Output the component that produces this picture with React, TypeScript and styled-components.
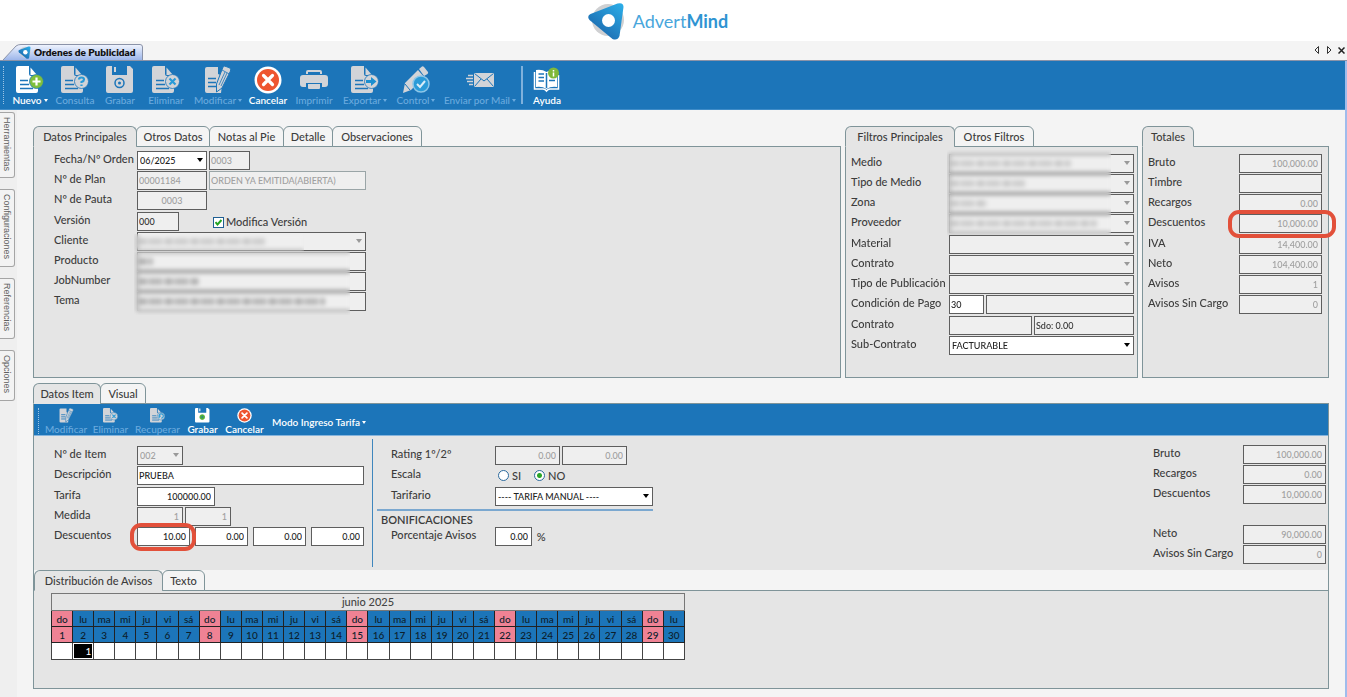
import React, { useId, useState } from "react";
import styled, { createGlobalStyle, css } from "styled-components";

const font = `"Lato", "Open Sans", sans-serif`;
const c = {
  blue: "#1c75b9",
  page: "#f4f4f4",
  panel: "#e5e5e5",
  line: "#7f9499",
  ink: "#3c3c3c",
  field: "#efefef",
  muted: "#a0a0a0",
};

const GlobalStyle = createGlobalStyle`
  *, *::before, *::after { box-sizing: border-box; }
  body { margin: 0; background: ${c.page}; color: ${c.ink}; font: 500 11px/14px ${font}; }
  button, input, select { font-family: inherit; margin: 0; }
`;

const Page = styled.div`
  min-height: 100vh;
  display: flex;
  flex-direction: column;
`;

const Brand = styled.header`
  height: 41px;
  background: #fff;
  display: flex;
  align-items: center;
  justify-content: center;
  gap: 8px;
  padding-right: 32px;
`;

const BrandName = styled.span`
  font: 400 18px/20px ${font};
  color: #48a6dc;
  b { font-weight: 700; color: #2f94d2; }
`;

const WindowTabs = styled.div`
  height: 20px;
  display: flex;
  justify-content: space-between;
  align-items: flex-end;
  padding: 0 1px 0 3px;
  border-bottom: 1px solid #8b93a8;
`;

const WindowTab = styled.button`
  position: relative;
  height: 16px;
  width: 140px;
  padding: 0 0 0 15px;
  border: 0;
  background: none;
  display: flex;
  align-items: center;
  gap: 3px;
  white-space: nowrap;
  font-size: 10px;
  line-height: 14px;
  font-weight: 800;
  color: #111;
`;

const TabShape = styled.svg`
  position: absolute;
  inset: 0;
  width: 140px;
  height: 16px;
`;

const Above = styled.span`
  position: relative;
  display: flex;
`;

const WindowControls = styled.div`
  display: flex;
  align-items: center;
  height: 20px;
  gap: 2px;
  button { border: 0; padding: 0; background: none; width: 10px; height: 10px; display: flex; align-items: center; justify-content: center; }
`;

const Frame = styled.div`
  flex: 1;
  display: flex;
  flex-direction: column;
  border-right: 2px solid #9fbcec;
`;

const ToolBar = styled.div<{ $compact?: boolean }>`
  display: flex;
  align-items: stretch;
  background: ${c.blue};
  height: ${(p) => (p.$compact ? 32 : 49)}px;
  padding: ${(p) => (p.$compact ? "4px 0 0 4px" : "5px 0 0 3px")};
  border-bottom: 1px solid ${(p) => (p.$compact ? "#86b4dc" : "#3f8cc8")};
`;

const Grip = styled.span<{ $compact?: boolean }>`
  width: ${(p) => (p.$compact ? 6 : 5)}px;
  height: ${(p) => (p.$compact ? 26 : 38)}px;
  border-left: 1px dotted #9cc3e4;
`;

const ToolButton = styled.button<{ $w: number }>`
  width: ${(p) => p.$w}px;
  padding: 0;
  border: 0;
  background: none;
  display: flex;
  flex-direction: column;
  align-items: center;
  color: #fff;
  font-size: 10px;
  line-height: 12px;
  font-weight: 600;
  white-space: nowrap;
  svg { flex: none; }
  &:disabled { color: #6aaade; font-weight: 500; }
`;

const Caption = styled.span`
  display: flex;
  align-items: center;
  gap: 2px;
`;

const Caret = styled.span`
  border: 2px solid transparent;
  border-top: 3px solid currentColor;
  border-bottom: 0;
`;

const MenuButton = styled.button`
  margin: 0 0 0 6px;
  padding: 0;
  height: 28px;
  border: 0;
  background: none;
  color: #fff;
  font-size: 10px;
  line-height: 12px;
  font-weight: 600;
`;

const ToolDivider = styled.span`
  width: 2px;
  height: 38px;
  margin: 0 1px;
  background: #7fb1dc;
`;

const Body = styled.div`
  flex: 1;
  display: flex;
`;

const Rail = styled.nav`
  width: 17px;
  background: #efefef;
  padding-top: 2px;
  display: flex;
  flex-direction: column;
  gap: 11px;
`;

const RailTab = styled.button<{ $h: number }>`
  width: 15px;
  height: ${(p) => p.$h}px;
  padding: 0 0 2px;
  border: 1px solid #a5a5a5;
  border-left: 0;
  border-radius: 0 3px 3px 0;
  background: #f3f3f3;
  color: #606060;
  font: 9px/12px "Liberation Sans", sans-serif;
  writing-mode: vertical-rl;
  display: flex;
  align-items: center;
  justify-content: center;
`;

const Content = styled.main`
  flex: 1;
  min-width: 0;
  padding: 16px 16px 8px;
  display: flex;
  flex-direction: column;
  gap: 5px;
`;

const TopPanels = styled.div`
  display: grid;
  grid-template-columns: 1fr 293px 187px;
  gap: 4px;
`;

const Section = styled.section`
  display: flex;
  flex-direction: column;
`;

const Tabs = styled.div`
  display: flex;
  height: 20px;
`;

const Tab = styled.button<{ $w: number; $on?: boolean }>`
  position: relative;
  width: ${(p) => p.$w}px;
  height: 21px;
  margin-right: -1px;
  padding: 0;
  border: 1px solid ${c.line};
  border-bottom-color: ${(p) => (p.$on ? c.panel : c.line)};
  border-radius: 6px 6px 0 0;
  background: ${(p) => (p.$on ? c.panel : c.page)};
  color: ${c.ink};
  font-size: 11px;
  line-height: 14px;
  font-weight: 500;
  white-space: nowrap;
`;

const Panel = styled.div<{ $pad?: string; $h?: number }>`
  flex: 1;
  min-height: ${(p) => p.$h ?? 0}px;
  padding: ${(p) => p.$pad ?? "0"};
  border: 1px solid ${c.line};
  background: ${c.panel};
`;

const Group = styled.div`
  position: relative;
  display: flex;
  flex-direction: column;
  gap: 1px;
  & + & { margin-top: 2px; }
`;

const Row = styled.div<{ $label: number; $pad?: number }>`
  display: grid;
  grid-template-columns: ${(p) => p.$label}px auto;
  justify-content: start;
  align-items: center;
  height: 19px;
  padding-left: ${(p) => p.$pad ?? 0}px;
  white-space: nowrap;
  font-size: 11px;
  & > label, & > span { line-height: 14px; padding-bottom: 3px; }
`;

const Fields = styled.div<{ $gap?: number }>`
  display: flex;
  align-items: center;
  gap: ${(p) => p.$gap ?? 2}px;
`;

const fieldBox = css`
  height: 19px;
  border: 1px solid #5e5e5e;
  border-radius: 0;
  background: #fff;
  color: #222;
  font-size: 9px;
  font-weight: 500;
  line-height: 14px;
  &:disabled, &:read-only:not(select) { background: ${c.field}; color: ${c.muted}; opacity: 1; }
`;

const TextField = styled.input<{ $w: number; $align?: string; $dark?: boolean; $soft?: boolean }>`
  ${fieldBox}
  width: ${(p) => p.$w}px;
  padding: 0 ${(p) => (p.$align === "right" ? 3 : 1)}px;
  text-align: ${(p) => p.$align ?? "left"};
  ${(p) => p.$dark && "&&:read-only { color: #333; }"}
  ${(p) => p.$soft && "&& { border-color: #9aa5a7; color: #7f8a8c; }"}
`;

const SelectWrap = styled.span<{ $w: number; $off?: boolean }>`
  position: relative;
  width: ${(p) => p.$w}px;
  height: 19px;
  display: block;
  &::after {
    content: "";
    position: absolute;
    right: 4px;
    top: 7px;
    border: 3px solid transparent;
    border-top: 4px solid ${(p) => (p.$off ? "#999" : "#000")};
    border-bottom: 0;
    pointer-events: none;
  }
`;

const SelectBox = styled.select`
  ${fieldBox}
  appearance: none;
  width: 100%;
  padding: 0 12px 0 2px;
`;

const Frost = styled.span<{ $w: number; $top: number; $bottom: number; $left: number }>`
  position: absolute;
  left: ${(p) => p.$left}px;
  top: ${(p) => p.$top}px;
  bottom: ${(p) => p.$bottom}px;
  width: ${(p) => p.$w}px;
  backdrop-filter: blur(2px);
`;

const Smudge = styled.span<{ $w: number; $strong?: boolean }>`
  position: absolute;
  left: 2px;
  top: 6px;
  width: ${(p) => p.$w}px;
  height: 7px;
  opacity: ${(p) => (p.$strong ? 1 : 0.6)};
  background: repeating-linear-gradient(90deg, #b2b2b2 0 7px, #cfcfcf 7px 10px, #bababa 10px 23px, #dadada 23px 26px);
`;

const Holder = styled.span`
  position: relative;
  display: block;
  height: 19px;
`;

const Marker = styled.span<{ $l: number; $r: number }>`
  position: absolute;
  z-index: 2;
  left: -${(p) => p.$l}px;
  right: -${(p) => p.$r}px;
  top: -4px;
  bottom: -5px;
  border: 4px solid #e2503a;
  border-radius: 11px;
  pointer-events: none;
`;

const CheckLabel = styled.label`
  display: flex;
  align-items: center;
  gap: 2px;
  margin-left: 32px;
  padding-top: 1px;
  position: relative;
  svg { position: absolute; left: 2px; top: 5px; pointer-events: none; }
`;

const CheckBox = styled.input`
  appearance: none;
  width: 11px;
  height: 11px;
  border: 1px solid #1f5f93;
  background: #fff;
`;

const RadioLabel = styled.label`
  display: flex;
  align-items: center;
  gap: 3px;
`;

const Radio = styled.input`
  appearance: none;
  width: 11px;
  height: 11px;
  border: 1px solid #2c6a9d;
  border-radius: 50%;
  background: #fff;
  &:checked { background: radial-gradient(circle, #2aa52a 0 2px, #fff 3px); }
`;

const ItemArea = styled.div`
  display: flex;
  height: 134px;
  padding: 3px 2px 3px 0;
`;

const ItemLeft = styled.div`
  width: 339px;
  padding: 7px 0 0 20px;
  border-right: 1px solid #3f86bd;
`;

const ItemMiddle = styled.div`
  width: 280px;
  padding: 7px 0 0 4px;
`;

const ItemTotals = styled.div`
  margin-left: auto;
  padding-top: 6px;
`;

const TotalsGap = styled.div`
  height: 21px;
`;

const Rule = styled.hr`
  height: 2px;
  margin: 3px 0 1px;
  border: 0;
  background: #7ba8d0;
`;

const SubTitle = styled.h3`
  margin: 0;
  padding-left: 4px;
  font-size: 11px;
  line-height: 15px;
  font-weight: 600;
`;

const Strip = styled.div`
  background: ${c.page};
`;

const CalendarPanel = styled.div`
  min-height: 98px;
  padding: 2px 0 0 17px;
  border-top: 1px solid ${c.line};
`;

const Calendar = styled.table`
  width: 634px;
  table-layout: fixed;
  border-collapse: collapse;
  background: #fff;
  text-align: center;
  font-size: 10px;
  line-height: 12px;
  color: #0c1e2c;
  th, td { padding: 0; height: 16px; border: 1px solid #222; font-weight: 500; }
  thead tr:first-child th { background: ${c.panel}; color: #444; height: 17px; border-color: #777; font-size: 11px; }
  td { height: 17px; border-color: #444; }
`;

const DayCell = styled.th<{ $sunday: boolean }>`
  background: ${(p) => (p.$sunday ? "#ef8294" : c.blue)};
`;

const ValueCell = styled.td<{ $on: boolean }>`
  ${(p) => p.$on && "background: #000; color: #fff; text-align: right; box-shadow: inset 0 0 0 1px #fff;"}
  && { padding-right: 2px; }
`;

/* ---------- drawings ---------- */

const OFF = "#d2d4d8";

function Logo({ size }: { size: number }) {
  const id = useId();
  return (
    <svg width={size} height={size} viewBox="0 0 37 38" aria-hidden="true">
      <defs>
        <linearGradient id={id} x1="1" y1="0" x2="0.2" y2="1">
          <stop offset="0" stopColor="#2cb0ea" />
          <stop offset="1" stopColor="#1b62a8" />
        </linearGradient>
      </defs>
      <circle cx="20.500" cy="18" r="16" fill="#cfd0d2" />
      <path d="M3 12 L30 1.500 Q36 0 36 5 L32 34 Q30 39 25 37 L2 18 Q-1 14 3 12Z" fill={`url(#${id})`} />
      <circle cx="21" cy="18.500" r="6.500" fill="#fff" />
    </svg>
  );
}

function Doc({ color, children, size = 28 }: { color: string; children?: React.ReactNode; size?: number }) {
  return (
    <svg width={size} height={size} viewBox="0 0 28 28" aria-hidden="true">
      <path d="M2 0H13V8Q13 10 15 10H22V25Q22 27 20 27H2Q0 27 0 25V2Q0 0 2 0Z" fill={color} />
      <path d="M14.500 1.500L21 9H14.500Z" fill={color} />
      <path d="M4 14.500H12M4 18.500H13M4 22.500H17" stroke={c.blue} strokeWidth="1.500" />
      {children}
    </svg>
  );
}

const Badge = ({ fill, mark, markColor }: { fill: string; mark: string; markColor: string }) => (
  <>
    <circle cx="20.500" cy="15.500" r="7" fill={fill} stroke={c.blue} strokeWidth="0.800" />
    <path d={mark} stroke={markColor} strokeWidth="2.200" fill="none" />
  </>
);

const NewIcon = () => <Doc color="#fff"><Badge fill="#7fbf3c" mark="M20.500 11.500V19.500M16.500 15.500H24.500" markColor="#fff" /></Doc>;
const QueryIcon = () => (
  <Doc color={OFF}><Badge fill={OFF} mark="M18 13.500Q18 11.500 20.500 11.500T23 13.500Q23 15 20.500 16V17M20.500 18.500V20" markColor="#2a9bd8" /></Doc>
);
const DeleteIcon = ({ size }: { size?: number }) => (
  <Doc color={OFF} size={size}><Badge fill={OFF} mark="M17.500 12.500L23.500 18.500M23.500 12.500L17.500 18.500" markColor="#2a9bd8" /></Doc>
);
const RecoverIcon = ({ size }: { size?: number }) => (
  <Doc color={OFF} size={size}><Badge fill={OFF} mark="M17 16A4 4 0 1 1 21 19M17 19V15H20" markColor="#2a9bd8" /></Doc>
);
const ExportIcon = () => (
  <Doc color={OFF}>
    <circle cx="20.500" cy="15.500" r="7" fill={OFF} stroke={c.blue} strokeWidth="0.800" />
    <path d="M15 14H20V11L25.500 15.500L20 20V17H15Z" fill="#1b8fd0" />
  </Doc>
);

function SaveIcon({ color, dot, size = 28 }: { color: string; dot: string; size?: number }) {
  return (
    <svg width={size} height={size} viewBox="0 0 28 28" aria-hidden="true">
      <path d="M2 0H6V9H21V0H24L27 3V25Q27 27 25 27H2Q0 27 0 25V2Q0 0 2 0Z" fill={color} />
      <path d="M8 1H10V6H8Z" fill={color} />
      <circle cx="13.500" cy="17" r="4.500" fill={dot === c.blue ? "none" : dot} stroke={dot} strokeWidth="1.500" />
      <circle cx="13.500" cy="17" r="1.500" fill={c.blue} />
    </svg>
  );
}

function EditIcon({ size = 28 }: { size?: number }) {
  return (
    <svg width={size} height={size} viewBox="0 0 28 28" aria-hidden="true">
      <path d="M3 1H14V8L19 10L17 27H3Q1 27 1 25V3Q1 1 3 1Z" fill={OFF} />
      <path d="M4 12.500H12M4 16.500H12M4 20.500H12" stroke={c.blue} strokeWidth="1.500" />
      <path d="M19 1Q20 -0.500 22 0.500L26 2Q27 3 26.500 5L18 22L12.500 26L12.500 18Z" fill={OFF} stroke={c.blue} />
      <path d="M18 4L25.500 8M21 6L15 19M23 7L17 20" stroke={c.blue} strokeWidth="0.800" />
    </svg>
  );
}

function CancelIcon({ size = 28 }: { size?: number }) {
  return (
    <svg width={size} height={size} viewBox="0 0 28 28" aria-hidden="true">
      <circle cx="14" cy="14" r="13.500" fill="#fff" />
      <circle cx="14" cy="14" r="11" fill="#ee5530" />
      <path d="M9.500 9.500L18.500 18.500M18.500 9.500L9.500 18.500" stroke="#fff" strokeWidth="3.200" strokeLinecap="round" />
    </svg>
  );
}

const PrintIcon = () => (
  <svg width="28" height="28" viewBox="0 0 28 28" aria-hidden="true">
    <path d="M6 8V6Q6 4 8 4H20Q22 4 22 6V8H20V6H8V8Z" fill={OFF} />
    <path d="M3 9H25Q28 9 28 12V18Q28 21 25 21H22V17H6V21H3Q0 21 0 18V12Q0 9 3 9Z" fill={OFF} />
    <path d="M8 18H20V22Q20 23 19 23H9Q8 23 8 22Z" fill={OFF} />
  </svg>
);

const ControlIcon = () => (
  <svg width="28" height="28" viewBox="0 0 28 28" aria-hidden="true">
    <path d="M17 3L20 0.500Q21 0 22 1L26 6Q26.500 7 25.500 8L22 10Z" fill={OFF} />
    <path d="M16 4L22 11L9 24L1 27L3 17Z" fill={OFF} />
    <path d="M3 18L8 24" stroke={c.blue} />
    <circle cx="19" cy="18" r="8" fill="#2a9bd8" stroke="#8cc6e8" strokeWidth="1.500" />
    <path d="M15 18L18 21L23 15" stroke="#d8edf8" strokeWidth="2" fill="none" />
  </svg>
);

const MailIcon = () => (
  <svg width="28" height="28" viewBox="0 0 28 28" aria-hidden="true">
    <path d="M8 7H28V21H8Z" fill={OFF} />
    <path d="M8.500 7.500L18 15L27.500 7.500M8.500 20.500L15 13M27.500 20.500L21 13" stroke={c.blue} fill="none" />
    <path d="M2 9.500H7M0 12.500H7M1 15.500H7M3 18.500H7" stroke={OFF} strokeWidth="1.500" />
  </svg>
);

const HelpIcon = () => (
  <svg width="28" height="28" viewBox="0 0 28 28" aria-hidden="true">
    <path d="M3 4Q9 3 13.500 6Q18 3 24 4V21Q18 20 13.500 23Q9 20 3 21Z" fill="#fff" />
    <path d="M1.500 6V23H10Q12 23 13.500 25Q15 23 17 23H25.500V9" stroke="#fff" strokeWidth="1.500" fill="none" />
    <path d="M13.500 7V22M5.500 8H11M5.500 11.500H11M5.500 15H11M16 14.500H22" stroke={c.blue} strokeWidth="1.500" />
    <circle cx="20.500" cy="7" r="5.500" fill="#7fb83a" />
    <path d="M20.500 4V5.500M20.500 6.500V10.500" stroke="#fff" strokeWidth="1.500" />
  </svg>
);

/* ---------- form parts ---------- */

function Labeled({ text, label, pad, children }: { text: string; label: number; pad?: number; children: (id: string) => React.ReactNode }) {
  const id = useId();
  return (
    <Row $label={label} $pad={pad}>
      <label htmlFor={id}>{text}</label>
      <Fields>{children(id)}</Fields>
    </Row>
  );
}

function Dropdown({ id, w, value = "", off, smudge }: { id: string; w: number; value?: string; off?: boolean; smudge?: number }) {
  return (
    <SelectWrap $w={w} $off={off}>
      <SelectBox id={id} disabled={off} defaultValue={value}>
        <option>{value}</option>
      </SelectBox>
      {smudge ? <Smudge $w={smudge} /> : null}
    </SelectWrap>
  );
}

function Tool({ w, icon, text, off, menu }: { w: number; icon: React.ReactNode; text: string; off?: boolean; menu?: boolean }) {
  return (
    <ToolButton $w={w} disabled={off}>
      {icon}
      <Caption>{text}{menu && <Caret />}</Caption>
    </ToolButton>
  );
}

function TabBar({ items }: { items: [string, number][] }) {
  const [on, setOn] = useState(0);
  return (
    <Tabs role="tablist">
      {items.map(([text, w], i) => (
        <Tab key={text} role="tab" aria-selected={i === on} $w={w} $on={i === on} onClick={() => setOn(i)}>{text}</Tab>
      ))}
    </Tabs>
  );
}

const totals: [string, string][][] = [
  [["Bruto", "100,000.00"], ["Timbre", ""], ["Recargos", "0.00"], ["Descuentos", "10,000.00"]],
  [["IVA", "14,400.00"], ["Neto", "104,400.00"], ["Avisos", "1"], ["Avisos Sin Cargo", "0"]],
];

const itemTotals: [string, string][][] = [
  [["Bruto", "100,000.00"], ["Recargos", "0.00"], ["Descuentos", "10,000.00"]],
  [["Neto", "90,000.00"], ["Avisos Sin Cargo", "0"]],
];

const weekdays = ["do", "lu", "ma", "mi", "ju", "vi", "sá"];
const days = Array.from({ length: 30 }, (_, i) => i);

export default function App() {
  return (
    <Page>
      <GlobalStyle />
      <Brand>
        <Logo size={38} />
        <BrandName>Advert<b>Mind</b></BrandName>
      </Brand>
      <WindowTabs>
        <WindowTab>
          <TabShape viewBox="0 0 140 16" aria-hidden="true">
            <defs>
              <linearGradient id="tabFill" x1="0" y1="0" x2="0" y2="1">
                <stop offset="0" stopColor="#f1f5fe" />
                <stop offset="1" stopColor="#9db6ea" />
              </linearGradient>
            </defs>
            <path d="M0 16L13 2Q15 .5 18 .5H137Q139.500 .5 139.500 3V16" fill="url(#tabFill)" stroke="#8b93a8" />
          </TabShape>
          <Above><Logo size={13} /></Above>
          <Above>Ordenes de Publicidad</Above>
        </WindowTab>
        <WindowControls>
          <button aria-label="Anterior"><svg width="6" height="8" viewBox="0 0 6 8"><path d="M4.500 .5V7.500L1 4Z" fill="none" stroke="#333" /></svg></button>
          <button aria-label="Siguiente"><svg width="6" height="8" viewBox="0 0 6 8"><path d="M1.500 .5V7.500L5 4Z" fill="none" stroke="#333" /></svg></button>
          <button aria-label="Cerrar"><svg width="7" height="7" viewBox="0 0 7 7"><path d="M.5 .5L6.500 6.500M6.500 .5L.5 6.500" stroke="#222" strokeWidth="1.500" /></svg></button>
        </WindowControls>
      </WindowTabs>
      <Frame>
        <ToolBar>
          <Grip />
          <Tool w={44} icon={<NewIcon />} text="Nuevo" menu />
          <Tool w={46} icon={<QueryIcon />} text="Consulta" off />
          <Tool w={44} icon={<SaveIcon color={OFF} dot={c.blue} />} text="Grabar" off />
          <Tool w={48} icon={<DeleteIcon />} text="Eliminar" off />
          <Tool w={56} icon={<EditIcon />} text="Modificar" off menu />
          <Tool w={44} icon={<CancelIcon />} text="Cancelar" />
          <Tool w={48} icon={<PrintIcon />} text="Imprimir" off />
          <Tool w={54} icon={<ExportIcon />} text="Exportar" off menu />
          <Tool w={48} icon={<ControlIcon />} text="Control" off menu />
          <Tool w={80} icon={<MailIcon />} text="Enviar por Mail" off menu />
          <ToolDivider />
          <Tool w={46} icon={<HelpIcon />} text="Ayuda" />
        </ToolBar>
        <Body>
          <Rail>
            <RailTab $h={66}>Herramientas</RailTab>
            <RailTab $h={78}>Configuraciones</RailTab>
            <RailTab $h={61}>Referencias</RailTab>
            <RailTab $h={51}>Opciones</RailTab>
          </Rail>
          <Content>
            <TopPanels>
              <Section>
                <TabBar items={[["Datos Principales", 104], ["Otros Datos", 74], ["Notas al Pie", 75], ["Detalle", 50], ["Observaciones", 90]]} />
                <Panel $h={232} $pad="4px 0 0 20px">
                  <Group>
                    <Labeled text="Fecha/Nº Orden" label={83}>{(id) => <><Dropdown id={id} w={70} value="06/2025" /><TextField aria-label="Número de orden" $w={41} disabled defaultValue="0003" /></>}</Labeled>
                    <Labeled text="Nº de Plan" label={83}>{(id) => <><TextField id={id} $w={70} disabled defaultValue="00001184" /><TextField aria-label="Estado" $w={157} $soft disabled defaultValue="ORDEN YA EMITIDA(ABIERTA)" /></>}</Labeled>
                    <Labeled text="Nº de Pauta" label={83}>{(id) => <TextField id={id} $w={70} $align="center" disabled defaultValue="0003" />}</Labeled>
                  </Group>
                  <Group>
                    <Labeled text="Versión" label={83}>{(id) => (
                      <>
                        <TextField id={id} $w={42} $dark readOnly defaultValue="000" />
                        <CheckLabel>
                          <CheckBox type="checkbox" defaultChecked />
                          <svg width="7" height="7" viewBox="0 0 7 7"><path d="M.5 3L2.500 5.500L6.500 1" fill="none" stroke="#22a322" strokeWidth="2" /></svg>
                          Modifica Versión
                        </CheckLabel>
                      </>
                    )}</Labeled>
                    <Labeled text="Cliente" label={83}>{(id) => <Dropdown id={id} w={229} off smudge={126} />}</Labeled>
                    <Labeled text="Producto" label={83}>{(id) => <Holder><TextField id={id} $w={229} readOnly /><Smudge $strong $w={14} /></Holder>}</Labeled>
                    <Labeled text="JobNumber" label={83}>{(id) => <Holder><TextField id={id} $w={229} readOnly /><Smudge $strong $w={60} /></Holder>}</Labeled>
                    <Labeled text="Tema" label={83}>{(id) => <Holder><TextField id={id} $w={229} readOnly /><Smudge $strong $w={186} /></Holder>}</Labeled>
                    <Frost $left={80} $w={170} $top={22} $bottom={60} />
                    <Frost $left={80} $w={216} $top={39} $bottom={-4} />
                  </Group>
                </Panel>
              </Section>
              <Section>
                <TabBar items={[["Filtros Principales", 110], ["Otros Filtros", 80]]} />
                <Panel $pad="7px 0 0 5px">
                  <Group>
                    <Labeled text="Medio" label={98}>{(id) => <Dropdown id={id} w={185} off smudge={120} />}</Labeled>
                    <Labeled text="Tipo de Medio" label={98}>{(id) => <Dropdown id={id} w={185} off smudge={74} />}</Labeled>
                    <Labeled text="Zona" label={98}>{(id) => <Dropdown id={id} w={185} off smudge={36} />}</Labeled>
                    <Labeled text="Proveedor" label={98}>{(id) => <Dropdown id={id} w={185} off smudge={146} />}</Labeled>
                    <Frost $left={96} $w={164} $top={-4} $bottom={-4} />
                  </Group>
                  <Group>
                    <Labeled text="Material" label={98}>{(id) => <Dropdown id={id} w={185} off />}</Labeled>
                    <Labeled text="Contrato" label={98}>{(id) => <Dropdown id={id} w={185} off />}</Labeled>
                    <Labeled text="Tipo de Publicación" label={98}>{(id) => <Dropdown id={id} w={185} off />}</Labeled>
                    <Labeled text="Condición de Pago" label={98}>{(id) => <><TextField id={id} $w={35} defaultValue="30" /><TextField aria-label="Detalle de condición" $w={148} disabled /></>}</Labeled>
                  </Group>
                  <Group>
                    <Labeled text="Contrato" label={98}>{(id) => <><TextField id={id} $w={83} disabled /><TextField aria-label="Saldo" $w={100} $dark readOnly defaultValue="Sdo: 0.00" /></>}</Labeled>
                    <Labeled text="Sub-Contrato" label={98}>{(id) => <Dropdown id={id} w={185} value="FACTURABLE" />}</Labeled>
                  </Group>
                </Panel>
              </Section>
              <Section>
                <TabBar items={[["Totales", 52]]} />
                <Panel $pad="7px 0 0 5px">
                  {totals.map((group, g) => (
                    <Group key={g}>
                      {group.map(([text, value]) => (
                        <Labeled key={text} text={text} label={91}>{(id) => (
                          <Holder>
                            <TextField id={id} $w={83} $align="right" disabled defaultValue={value} />
                            {text === "Descuentos" && <Marker $l={11} $r={14} />}
                          </Holder>
                        )}</Labeled>
                      ))}
                    </Group>
                  ))}
                </Panel>
              </Section>
            </TopPanels>
            <Section>
              <TabBar items={[["Datos Item", 68], ["Visual", 46]]} />
              <Panel>
                <ToolBar $compact>
                  <Grip $compact />
                  <Tool w={44} icon={<EditIcon size={15} />} text="Modificar" off />
                  <Tool w={45} icon={<DeleteIcon size={15} />} text="Eliminar" off />
                  <Tool w={49} icon={<RecoverIcon size={15} />} text="Recuperar" off />
                  <Tool w={41} icon={<SaveIcon size={15} color="#fff" dot="#4fae3a" />} text="Grabar" />
                  <Tool w={43} icon={<CancelIcon size={15} />} text="Cancelar" />
                  <MenuButton><Caption>Modo Ingreso Tarifa<Caret /></Caption></MenuButton>
                </ToolBar>
                <ItemArea>
                  <ItemLeft>
                    <Group>
                      <Labeled text="Nº de Item" label={83}>{(id) => <Dropdown id={id} w={46} value="002" off />}</Labeled>
                      <Labeled text="Descripción" label={83}>{(id) => <TextField id={id} $w={227} defaultValue="PRUEBA" />}</Labeled>
                    </Group>
                    <Group>
                      <Labeled text="Tarifa" label={83}>{(id) => <TextField id={id} $w={78} $align="right" defaultValue="100000.00" />}</Labeled>
                      <Labeled text="Medida" label={83}>{(id) => <><TextField id={id} $w={46} $align="right" disabled defaultValue="1" /><TextField aria-label="Medida 2" $w={46} $align="right" disabled defaultValue="1" /></>}</Labeled>
                      <Row $label={83}>
                        <label htmlFor="desc1">Descuentos</label>
                        <Fields $gap={5}>
                          <Holder>
                            <TextField id="desc1" $w={53} $align="right" defaultValue="10.00" />
                            <Marker $l={7} $r={6} />
                          </Holder>
                          <TextField aria-label="Descuento 2" $w={53} $align="right" defaultValue="0.00" />
                          <TextField aria-label="Descuento 3" $w={53} $align="right" defaultValue="0.00" />
                          <TextField aria-label="Descuento 4" $w={53} $align="right" defaultValue="0.00" />
                        </Fields>
                      </Row>
                    </Group>
                  </ItemLeft>
                  <ItemMiddle>
                    <Group>
                      <Labeled text="Rating 1º/2º" label={104} pad={14}>{(id) => <><TextField id={id} $w={65} $align="right" disabled defaultValue="0.00" /><TextField aria-label="Rating 2" $w={65} $align="right" disabled defaultValue="0.00" /></>}</Labeled>
                      <Row $label={107} $pad={14}>
                        <span>Escala</span>
                        <Fields $gap={13}>
                          <RadioLabel><Radio type="radio" name="escala" />SI</RadioLabel>
                          <RadioLabel><Radio type="radio" name="escala" defaultChecked />NO</RadioLabel>
                        </Fields>
                      </Row>
                    </Group>
                    <Group>
                      <Labeled text="Tarifario" label={104} pad={14}>{(id) => <Dropdown id={id} w={158} value="---- TARIFA MANUAL ----" />}</Labeled>
                    </Group>
                    <Rule />
                    <SubTitle>BONIFICACIONES</SubTitle>
                    <Labeled text="Porcentaje Avisos" label={104} pad={14}>{(id) => <><TextField id={id} $w={37} $align="right" defaultValue="0.00" /><span>&nbsp;%</span></>}</Labeled>
                  </ItemMiddle>
                  <ItemTotals>
                    {itemTotals.map((group, g) => (
                      <React.Fragment key={g}>
                        {g > 0 && <TotalsGap />}
                        <Group>
                          {group.map(([text, value]) => (
                            <Labeled key={text} text={text} label={90}>{(id) => <TextField id={id} $w={83} $align="right" disabled defaultValue={value} />}</Labeled>
                          ))}
                        </Group>
                      </React.Fragment>
                    ))}
                  </ItemTotals>
                </ItemArea>
                <Strip>
                  <TabBar items={[["Distribución de Avisos", 129], ["Texto", 43]]} />
                </Strip>
                <CalendarPanel>
                  <Calendar>
                    <thead>
                      <tr><th colSpan={30}>junio 2025</th></tr>
                      <tr>{days.map((d) => <DayCell key={d} $sunday={d % 7 === 0}>{weekdays[d % 7]}</DayCell>)}</tr>
                      <tr>{days.map((d) => <DayCell key={d} $sunday={d % 7 === 0}>{d + 1}</DayCell>)}</tr>
                    </thead>
                    <tbody>
                      <tr>{days.map((d) => <ValueCell key={d} $on={d === 1}>{d === 1 ? "1" : ""}</ValueCell>)}</tr>
                    </tbody>
                  </Calendar>
                </CalendarPanel>
              </Panel>
            </Section>
          </Content>
        </Body>
      </Frame>
    </Page>
  );
}
